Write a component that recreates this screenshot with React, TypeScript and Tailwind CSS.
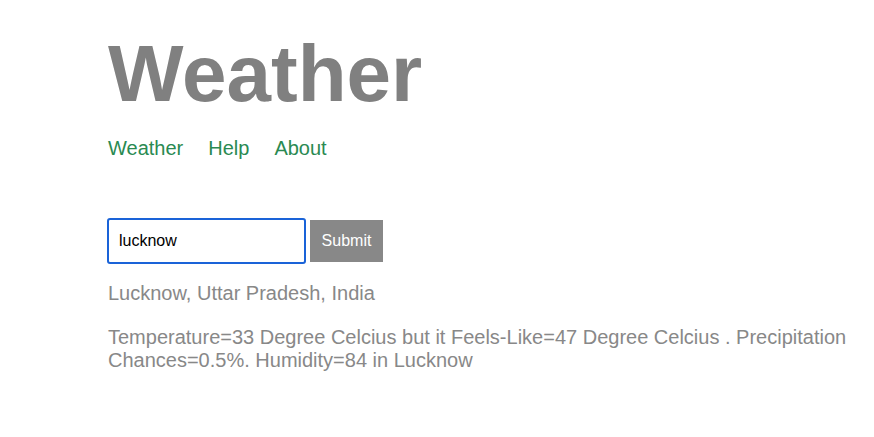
export default function App() {
  return (
    <div className="min-h-screen bg-white pt-[34px] font-['Liberation_Sans',Arial,sans-serif] text-[#888888]">
      <div className="w-[750px] pl-[108px] box-content">
        <h1 className="text-[80px] font-bold leading-none text-[#808080]">Weather</h1>
        <nav className="mt-[23px] flex gap-[25px] text-[20px] leading-[23px] text-[#2a8a52]">
          <a href="#">Weather</a>
          <a href="#">Help</a>
          <a href="#">About</a>
        </nav>
        <form className="-ml-[1px] mt-[58px] flex items-center gap-[4px]" onSubmit={(e) => e.preventDefault()}>
          <input
            type="text"
            defaultValue="lucknow"
            className="h-[46px] w-[199px] rounded-[3px] border-2 border-[#1a63d8] px-[10px] text-[16px] text-black outline-none"
          />
          <button className="h-[42px] w-[73px] bg-[#888888] text-[16px] text-white">Submit</button>
        </form>
        <p className="mt-[18px] text-[20px] leading-[23px]">Lucknow, Uttar Pradesh, India</p>
        <p className="mt-[21px] text-[20px] leading-[23px]">
          Temperature=33 Degree Celcius but it Feels-Like=47 Degree Celcius . Precipitation Chances=0.5%. Humidity=84 in Lucknow
        </p>
      </div>
    </div>
  );
}
